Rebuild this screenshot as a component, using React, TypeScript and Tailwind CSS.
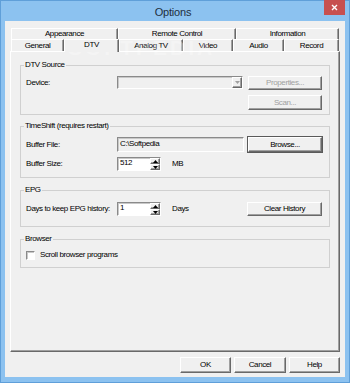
import React from "react"

const raised =
  "border border-t-white border-l-white border-b-[#696969] border-r-[#696969] shadow-[inset_-1px_-1px_0_#a0a0a0]"
const sunken =
  "border border-t-[#8a8a8a] border-l-[#8a8a8a] border-b-white border-r-white shadow-[inset_1px_1px_0_#c8c8c8]"

const topTabs = [
  { label: "Appearance", w: "w-[107px]" },
  { label: "Remote Control", w: "w-[118px]" },
  { label: "Information", w: "w-[103px]" },
]

const frontTabs = [
  { label: "General", w: "w-[53px]" },
  { label: "DTV", w: "w-[55px]", active: true },
  { label: "Analog TV", w: "w-[64px]" },
  { label: "Video", w: "w-[50px]" },
  { label: "Audio", w: "w-[51px]" },
  { label: "Record", w: "w-[55px]" },
]

const Btn = ({ children, disabled, focus, className = "" }: { children: React.ReactNode; disabled?: boolean; focus?: boolean; className?: string }) => (
  <div
    className={`flex items-center justify-center bg-[#f0f0f0] leading-[10px] ${raised} ${
      focus ? "outline outline-1 outline-[#5a5a5a]" : ""
    } ${disabled ? "text-[#a0a0a0]" : "text-black"} ${className}`}
  >
    {children}
  </div>
)

const Arrow = ({ up, gray }: { up?: boolean; gray?: boolean }) => (
  <svg width="5" height="3" viewBox="0 0 5 3">
    <path d={up ? "M0 3 L2.5 0 L5 3 Z" : "M0 0 L5 0 L2.5 3 Z"} fill={gray ? "#a0a0a0" : "#000"} />
  </svg>
)

const Spin = ({ value }: { value: string }) => (
  <div className={`flex w-[44px] h-[14px] bg-white ${sunken}`}>
    <span className="flex-1 pl-[2px] leading-[10px]">{value}</span>
    <div className="flex flex-col w-[10px]">
      <div className={`flex-1 flex items-center justify-center bg-[#f0f0f0] ${raised}`}>
        <Arrow up />
      </div>
      <div className={`flex-1 flex items-center justify-center bg-[#f0f0f0] ${raised}`}>
        <Arrow />
      </div>
    </div>
  </div>
)

const Group = ({ title, className = "", children }: { title: string; className?: string; children: React.ReactNode }) => (
  <fieldset className={`border border-[#d0d0d0] px-[5px] pr-[7px] ${className}`}>
    <legend className="-ml-[2px] px-[1px] leading-[10px]">{title}</legend>
    {children}
  </fieldset>
)

export default function App() {
  return (
    <div className="w-[350px] h-[383px] flex flex-col bg-[#8cc2f0] border border-[#5f9fd9] font-['Liberation_Sans',Arial,sans-serif] text-[8px] tracking-[-0.4px] text-black">
      {/* Title bar */}
      <div className="h-[20px] shrink-0 grid grid-cols-[1fr_auto_1fr] pr-[4px]">
        <div />
        <div className="pt-[5px] text-[11px] tracking-[-0.2px] leading-[13px] text-[#1f2f40]">Options</div>
        <div className="flex justify-end items-start -mt-[1px]">
          <div className="w-[21px] h-[15px] bg-[#c75050] flex items-center justify-center">
            <svg width="7" height="7" viewBox="0 0 7 7">
              <path d="M1 1 L6 6 M6 1 L1 6" stroke="#fff" strokeWidth="1.4" />
            </svg>
          </div>
        </div>
      </div>

      {/* Client area */}
      <div className="relative mx-[4px] mb-[5px] flex-1 flex flex-col bg-[#f0f0f0] pt-[7px] px-[5px]">
        {/* watermark */}
        <span className="absolute left-[63px] top-[11px] text-[21px] font-bold tracking-[3px] text-white opacity-30 pointer-events-none">
          SOFTPEDIA
        </span>

        {/* Tabs */}
        <div className="ml-[1px] flex flex-col">
          <div className="flex h-[11px]">
            {topTabs.map((t) => (
              <div
                key={t.label}
                className={`${t.w} border-t border-l border-r border-t-white border-l-white border-r-[#696969] shadow-[inset_-1px_0_0_#a0a0a0] text-center leading-[10px]`}
              >
                {t.label}
              </div>
            ))}
          </div>
          <div className="flex h-[12px]">
            {frontTabs.map((t) => (
              <div
                key={t.label}
                className={`${t.w} border-t border-l border-r border-t-white border-l-white border-r-[#696969] shadow-[inset_-1px_0_0_#a0a0a0] text-center ${
                  t.active ? "relative z-10 -mb-[1px] h-[13px] bg-[#f0f0f0] leading-[9px]" : "leading-[11px]"
                }`}
              >
                {t.label}
              </div>
            ))}
          </div>
        </div>

        {/* Panel */}
        <div className="h-[301px] flex flex-col px-[9px] border border-t-white border-l-white border-b-[#696969] border-r-[#696969] shadow-[inset_-1px_-1px_0_#a0a0a0]">
          <Group title="DTV Source" className="mt-[8px] pb-[4px]">
            <div className="mt-[6px] flex items-start h-[14px]">
              <span className="w-[91px] self-center">Device:</span>
              <div className={`w-[126px] h-[13px] flex justify-end bg-[#f0f0f0] ${sunken}`}>
                <div className={`w-[10px] flex items-center justify-center ${raised}`}>
                  <Arrow gray />
                </div>
              </div>
              <Btn disabled className="ml-[5px] w-[74px] h-[14px]">Properties...</Btn>
            </div>
            <div className="mt-[5px] flex justify-end">
              <Btn disabled className="w-[74px] h-[15px]">Scan...</Btn>
            </div>
          </Group>

          <Group title="TimeShift (requires restart)" className="mt-[6px] pb-[6px]">
            <div className="mt-[6px] flex items-center h-[15px]">
              <span className="w-[91px]">Buffer File:</span>
              <div className={`w-[127px] h-[15px] pl-[2px] leading-[12px] bg-[#f0f0f0] ${sunken}`}>C:\Softpedia</div>
              <Btn focus className="ml-[4px] w-[74px] h-[15px]">Browse...</Btn>
            </div>
            <div className="mt-[5px] flex items-center h-[14px]">
              <span className="w-[91px]">Buffer Size:</span>
              <Spin value="512" />
              <span className="ml-[11px]">MB</span>
            </div>
          </Group>

          <Group title="EPG" className="mt-[7px] pb-[10px]">
            <div className="mt-[7px] flex items-center h-[14px]">
              <span className="w-[91px]">Days to keep EPG history:</span>
              <Spin value="1" />
              <span className="ml-[11px]">Days</span>
              <Btn className="ml-auto w-[75px] h-[14px]">Clear History</Btn>
            </div>
          </Group>

          <Group title="Browser" className="mt-[7px] pb-[6px]">
            <div className="mt-[5px] flex items-center h-[12px]">
              <div className={`w-[9px] h-[9px] bg-white ${sunken}`} />
              <span className="ml-[5px]">Scroll browser programs</span>
            </div>
          </Group>
        </div>

        {/* Dialog buttons */}
        <div className="mt-[5px] flex justify-end gap-[3px]">
          <Btn className="w-[51px] h-[16px]">OK</Btn>
          <Btn className="w-[52px] h-[16px]">Cancel</Btn>
          <Btn className="w-[51px] h-[16px]">Help</Btn>
        </div>
      </div>
    </div>
  )
}
